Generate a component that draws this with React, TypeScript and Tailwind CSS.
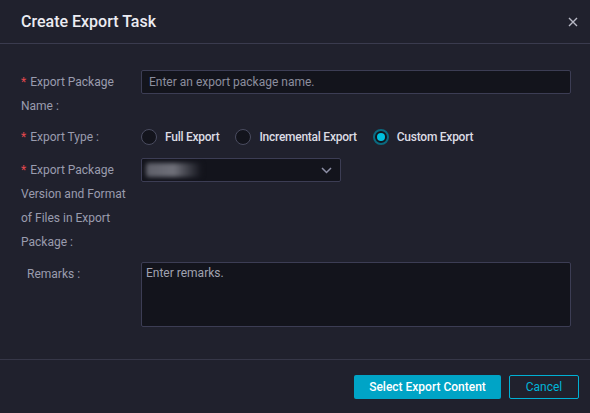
import React from "react";

function Label({ text, required, className = "" }: { text: React.ReactNode; required?: boolean; className?: string }) {
  return (
    <div className={`w-[120px] shrink-0 text-[12px] leading-[24px] text-[#9a9cae] ${className}`}>
      {required && <span className="text-[#e5484d] mr-[4px]">*</span>}
      {text}
    </div>
  );
}

function Radio({ label, checked }: { label: string; checked?: boolean }) {
  return (
    <label className="flex items-center gap-[8px] mr-[16px]">
      {checked ? (
        <span className="w-[16px] h-[16px] rounded-full border-[2px] border-[#0a6a80] bg-[#13141c] flex items-center justify-center">
          <span className="w-[8px] h-[8px] rounded-full bg-[#00c1de]" />
        </span>
      ) : (
        <span className="w-[16px] h-[16px] rounded-full border border-[#4a4c60] bg-[#13141c]" />
      )}
      <span className="text-[12px] font-medium tracking-[-0.25px] text-[#dcdce4]">{label}</span>
    </label>
  );
}

export default function App() {
  return (
    <div className="w-[590px] h-[413px] bg-[#20212d] flex flex-col" style={{ fontFamily: "Roboto, 'Liberation Sans', sans-serif" }}>
      <div className="h-[44px] shrink-0 flex items-center justify-between pl-[21px] pr-[12px] border-b border-[#3a3b4e]">
        <h1 className="text-[16px] font-medium text-[#ececf2]">Create Export Task</h1>
        <button className="text-[#b8b9c6]">
          <svg width="10" height="10" viewBox="0 0 10 10" fill="none" stroke="currentColor" strokeWidth="1.4">
            <path d="M1 1l8 8M9 1l-8 8" />
          </svg>
        </button>
      </div>

      <div className="flex-1 pl-[21px] pr-[19px] pt-[26px]">
        <div className="flex">
          <Label required text={<>Export Package<br />Name :</>} />
          <input
            placeholder="Enter an export package name."
            className="flex-1 h-[24px] bg-[#13141c] border border-[#3c3d54] rounded-[2px] px-[7px] text-[12px] text-[#dcdce4] placeholder:text-[#8c8e9e] outline-none"
          />
        </div>

        <div className="flex mt-[7px] items-center">
          <Label required text="Export Type :" />
          <div className="flex items-center">
            <Radio label="Full Export" />
            <Radio label="Incremental Export" />
            <Radio label="Custom Export" checked />
          </div>
        </div>

        <div className="flex mt-[9px]">
          <Label required text={<>Export Package<br />Version and Format<br />of Files in Export<br />Package :</>} />
          <div className="w-[200px] h-[24px] bg-[#13141c] border border-[#3c3d54] rounded-[2px] flex items-center justify-between pl-[4px] pr-[8px]">
            <div className="w-[56px] h-[14px] rounded-[3px] bg-gradient-to-r from-[#5e5f69] via-[#6f7079] to-[#13141c] blur-[2px]" />
            <svg width="11" height="7" viewBox="0 0 11 7" fill="none" stroke="#8d8fa6" strokeWidth="1.5">
              <path d="M1 1l4.5 4.5L10 1" />
            </svg>
          </div>
        </div>

        <div className="flex mt-[8px]">
          <Label text="Remarks :" className="pl-[6px]" />
          <textarea
            placeholder="Enter remarks."
            className="flex-1 h-[65px] resize-none bg-[#13141c] border border-[#3c3d54] rounded-[2px] px-[4px] py-[1px] text-[12px] text-[#dcdce4] placeholder:text-[#a0a2b0] outline-none"
          />
        </div>
      </div>

      <div className="h-[54px] shrink-0 border-t border-[#363748] flex items-center justify-end gap-[8px] pr-[11px]">
        <button className="w-[147px] h-[24px] bg-[#00a4c6] rounded-[2px] text-[12px] font-medium text-white">
          Select Export Content
        </button>
        <button className="w-[70px] h-[24px] border border-[#00b0d4] rounded-[2px] text-[12px] text-[#00b4d8]">
          Cancel
        </button>
      </div>
    </div>
  );
}
